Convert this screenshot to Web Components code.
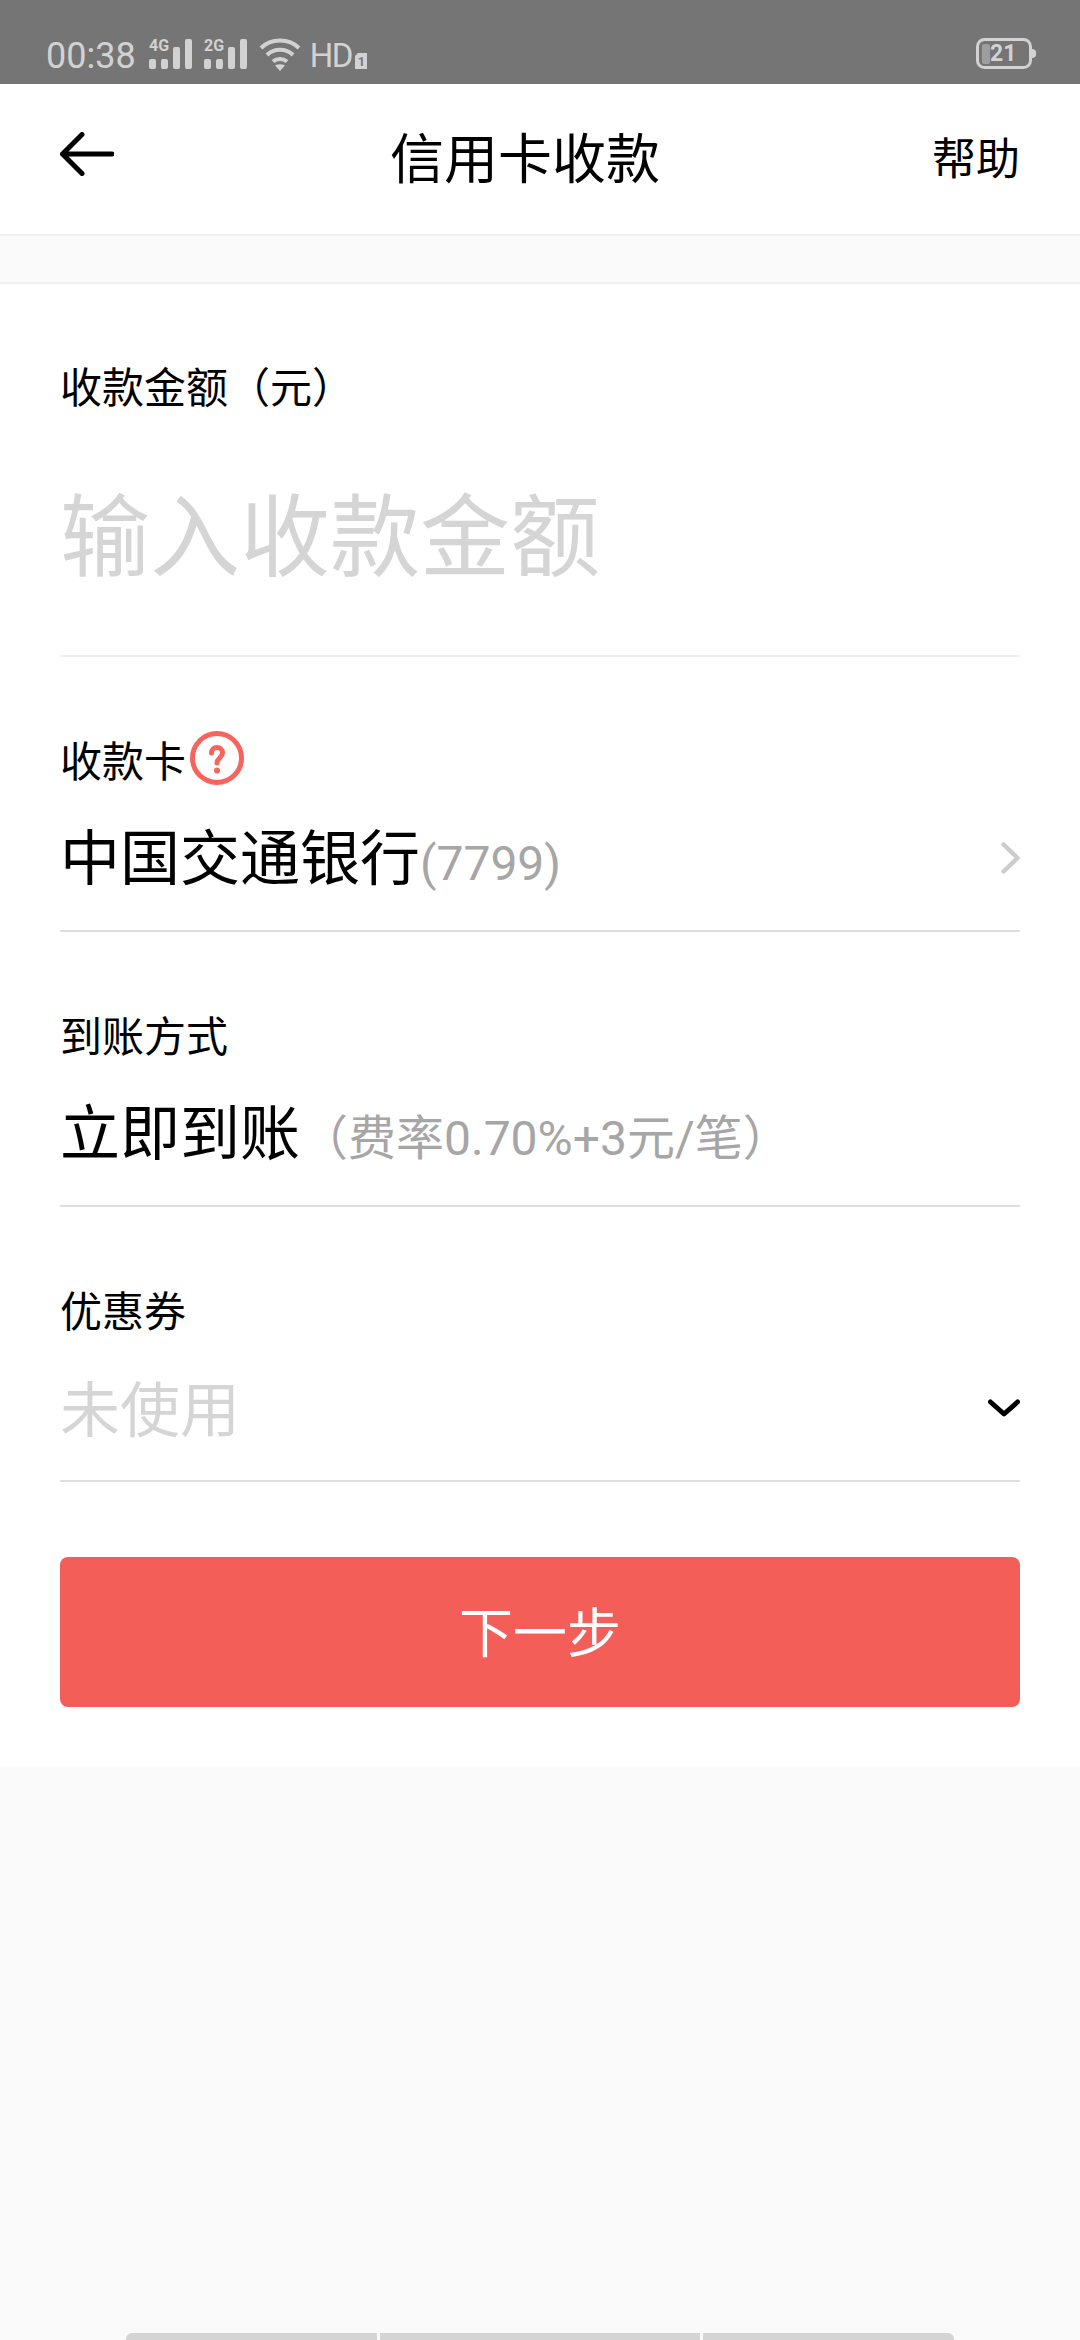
<!DOCTYPE html>
<html lang="zh">
<head>
<meta charset="utf-8">
<style>
  html, body { margin: 0; padding: 0; height: 100%; background: #fafafa; }
  body { font-family: Roboto, "Noto Sans CJK SC", sans-serif; }
  pay-page { height: 2340px; }
</style>
</head>
<body>
<pay-page>
  <status-bar slot="status"></status-bar>
  <top-nav slot="nav" title="信用卡收款" action="帮助"></top-nav>
  <form-row label="收款金额（元）" kind="amount">输入收款金额</form-row>
  <form-row label="收款卡" kind="card" hint>中国交通银行<span slot="note">(7799)</span></form-row>
  <form-row label="到账方式" kind="speed">立即到账<span slot="note">（费率0.70%+3元/笔）</span></form-row>
  <form-row label="优惠券" kind="coupon">未使用</form-row>
  <next-button>下一步</next-button>
</pay-page>

<script>
class PayPage extends HTMLElement {
  connectedCallback() {
    this.attachShadow({ mode: 'open' });
    this.shadowRoot.innerHTML = `
      <style>
        :host { display: flex; flex-direction: column; background: #fafafa; position: relative; overflow: hidden; }
        .gap { height: 46px; flex: none; }
        .form { background: #fff; border-top: 2px solid #f0f0f0; padding: 0 60px 60px; display: flex; flex-direction: column; }
        .keys { position: absolute; left: 126px; right: 126px; bottom: 0; height: 7px; display: flex; gap: 3px; }
        .keys i { background: #d4d4d4; }
        .keys i:nth-child(1) { width: 251px; border-radius: 6px 0 0 0; }
        .keys i:nth-child(2) { flex: 1; }
        .keys i:nth-child(3) { width: 251px; border-radius: 0 6px 0 0; }
      </style>
      <slot name="status"></slot>
      <slot name="nav"></slot>
      <div class="gap"></div>
      <div class="form"><slot></slot></div>
      <div class="keys"><i></i><i></i><i></i></div>
    `;
  }
}

class StatusBar extends HTMLElement {
  connectedCallback() {
    const bars = `
      <rect x="0" y="21" width="7" height="10" rx="2"/><rect x="12" y="21" width="7" height="10" rx="2"/>
      <rect x="24" y="9" width="7" height="22" rx="2"/><rect x="36" y="1" width="7" height="30" rx="2"/>`;
    this.attachShadow({ mode: 'open' });
    this.shadowRoot.innerHTML = `
      <style>
        :host { display: flex; height: 84px; box-sizing: border-box; background: #757575; color: #d2d2d2; align-items: flex-end; padding: 0 47px 14px 46px; justify-content: space-between; font-family: Roboto, sans-serif; }
        .left { display: flex; align-items: center; height: 32px; }
        .time { font-size: 36px; line-height: 32px; padding-top: 4px; margin-right: 13px; }
        .hd { font-size: 33px; line-height: 32px; padding-top: 3px; margin-left: 9px; letter-spacing: -1.5px; }
        svg { display: block; fill: #d2d2d2; flex: none; }
        .sig { margin: -6px 11px 0 0; overflow: visible; }
        .small { font: 700 16px/16px Roboto, sans-serif; fill: #d2d2d2; }
        .sim { align-self: flex-end; margin: 0 0 1px 3px; }
        .batt { width: 57px; height: 32px; position: relative; }
        .batt svg { position: absolute; left: 0; top: 0; }
        .batt .num { position: absolute; left: 14px; top: 0; font: 700 23px/32px Roboto, sans-serif; }
      </style>
      <div class="left">
        <span class="time">00:38</span>
        <svg class="sig" width="44" height="38" viewBox="0 -6 44 38"><text class="small" x="0" y="13">4G</text>${bars}</svg>
        <svg class="sig" width="44" height="38" viewBox="0 -6 44 38"><text class="small" x="0" y="13">2G</text>${bars}</svg>
        <svg width="42" height="34" viewBox="0 0 42 34">
          <g fill="none" stroke="#d2d2d2" stroke-width="4">
            <path d="M2 11C12 1 30 1 40 11"/><path d="M8 18C15 11 27 11 34 18"/><path d="M14 24.500C18 21 24 21 28 24.500"/>
          </g>
          <path d="M16 28.500Q21 26 26 28.500L21 34Z"/>
        </svg>
        <span class="hd">HD</span>
        <svg class="sim" width="12" height="16" viewBox="0 0 12 16">
          <path d="M3 0H12V16H0V3Z"/><text x="3" y="13" font-family="Roboto" font-weight="700" font-size="12" fill="#757575">1</text>
        </svg>
      </div>
      <div class="batt">
        <svg width="60" height="32" viewBox="0 0 60 32">
          <rect x="1.500" y="1.500" width="53" height="28" rx="7" fill="none" stroke="#d2d2d2" stroke-width="3"/>
          <rect x="6" y="6" width="8" height="20" rx="2" fill="#9e9e9e"/>
          <path d="M56 11a4.500 4.500 0 0 1 0 9Z"/>
        </svg>
        <span class="num">21</span>
      </div>
    `;
  }
}

class TopNav extends HTMLElement {
  connectedCallback() {
    this.attachShadow({ mode: 'open' });
    this.shadowRoot.innerHTML = `
      <style>
        :host { display: flex; height: 152px; box-sizing: border-box; background: #fff; border-bottom: 2px solid #f0f0f0; align-items: center; padding: 0 60px 8px; color: #000; font-family: "Noto Sans CJK SC", sans-serif; }
        svg { display: block; margin-top: -2px; flex: none; }
        h1 { flex: 1; margin: 0; font-size: 54px; font-weight: 400; text-align: center; padding-left: 4px; }
        span { font-size: 44px; padding-top: 2px; }
      </style>
      <svg width="54" height="44" viewBox="0 0 54 44" fill="none" stroke="#000" stroke-width="5" stroke-linecap="round" stroke-linejoin="round">
        <path d="M2.500 22H52M22 2.500 2.500 22 22 41.500"/>
      </svg>
      <h1>${this.getAttribute('title')}</h1>
      <span>${this.getAttribute('action')}</span>
    `;
  }
}

class FormRow extends HTMLElement {
  connectedCallback() {
    const kind = this.getAttribute('kind');
    const hint = this.hasAttribute('hint') ? `
      <svg class="hint" width="54" height="54" viewBox="0 0 54 54">
        <circle cx="27" cy="27" r="24.500" fill="none" stroke="#f6645d" stroke-width="5"/>
        <path d="M21.500 22c0-7.500 11-7.500 11 0 0 4.500-5.500 5-5.500 10" fill="none" stroke="#f6645d" stroke-width="5" stroke-linecap="round"/>
        <circle cx="27" cy="39.500" r="3" fill="#f6645d"/>
      </svg>` : '';
    let tail = '';
    if (kind === 'card') tail = `<svg class="tail" width="19" height="32" viewBox="0 0 19 32" fill="none" stroke="#cdcdcd" stroke-width="4.500" stroke-linecap="round" stroke-linejoin="round"><path d="M2.500 2.500 16.500 16 2.500 29.500"/></svg>`;
    if (kind === 'coupon') tail = `<svg class="tail" width="32" height="20" viewBox="0 0 32 20" fill="none" stroke="#000" stroke-width="5" stroke-linecap="round" stroke-linejoin="round"><path d="M2.500 3 16 15 29.500 3"/></svg>`;
    this.attachShadow({ mode: 'open' });
    this.shadowRoot.innerHTML = `
      <style>
        :host { display: flex; flex-direction: column; height: 275px; box-sizing: border-box; border-bottom: 2px solid #dedede; font-family: "Noto Sans CJK SC", sans-serif; color: #000; }
        :host([kind="amount"]) { height: 373px; border-bottom-color: #efefef; }
        .label { display: flex; align-items: center; font-size: 42px; height: 54px; margin-top: 74px; flex: none; }
        :host([kind="amount"]) .label { margin-top: 73px; }
        .hint { margin-left: 4px; }
        .value { display: flex; align-items: center; justify-content: space-between; flex: 1; padding-bottom: 3px; }
        :host([kind="amount"]) .value { padding-bottom: 7px; }
        .main { font-size: 60px; line-height: 1; white-space: nowrap; display: flex; align-items: baseline; }
        :host([kind="amount"]) .main { font-size: 90px; color: #d5d5d5; }
        :host([kind="coupon"]) .main { color: #d5d5d5; }
        .tail { margin-top: 3px; flex: none; }
        :host([kind="coupon"]) .tail { margin-top: 6px; }
        ::slotted([slot="note"]) { color: #a6a6a6; font-family: Roboto, "Noto Sans CJK SC", sans-serif; font-size: 48px; }
      </style>
      <div class="label">${this.getAttribute('label')}${hint}</div>
      <div class="value"><div class="main"><slot></slot><slot name="note"></slot></div>${tail}</div>
    `;
  }
}

class NextButton extends HTMLElement {
  connectedCallback() {
    this.attachShadow({ mode: 'open' });
    this.shadowRoot.innerHTML = `
      <style>
        :host { display: block; margin-top: 75px; }
        button { display: block; width: 100%; height: 150px; border: 0; border-radius: 8px; background: #f45e58; color: #fff; font: 400 54px "Noto Sans CJK SC", sans-serif; padding: 0 0 5px; }
      </style>
      <button><slot></slot></button>
    `;
  }
}

customElements.define('pay-page', PayPage);
customElements.define('status-bar', StatusBar);
customElements.define('top-nav', TopNav);
customElements.define('form-row', FormRow);
customElements.define('next-button', NextButton);
</script>
</body>
</html>
